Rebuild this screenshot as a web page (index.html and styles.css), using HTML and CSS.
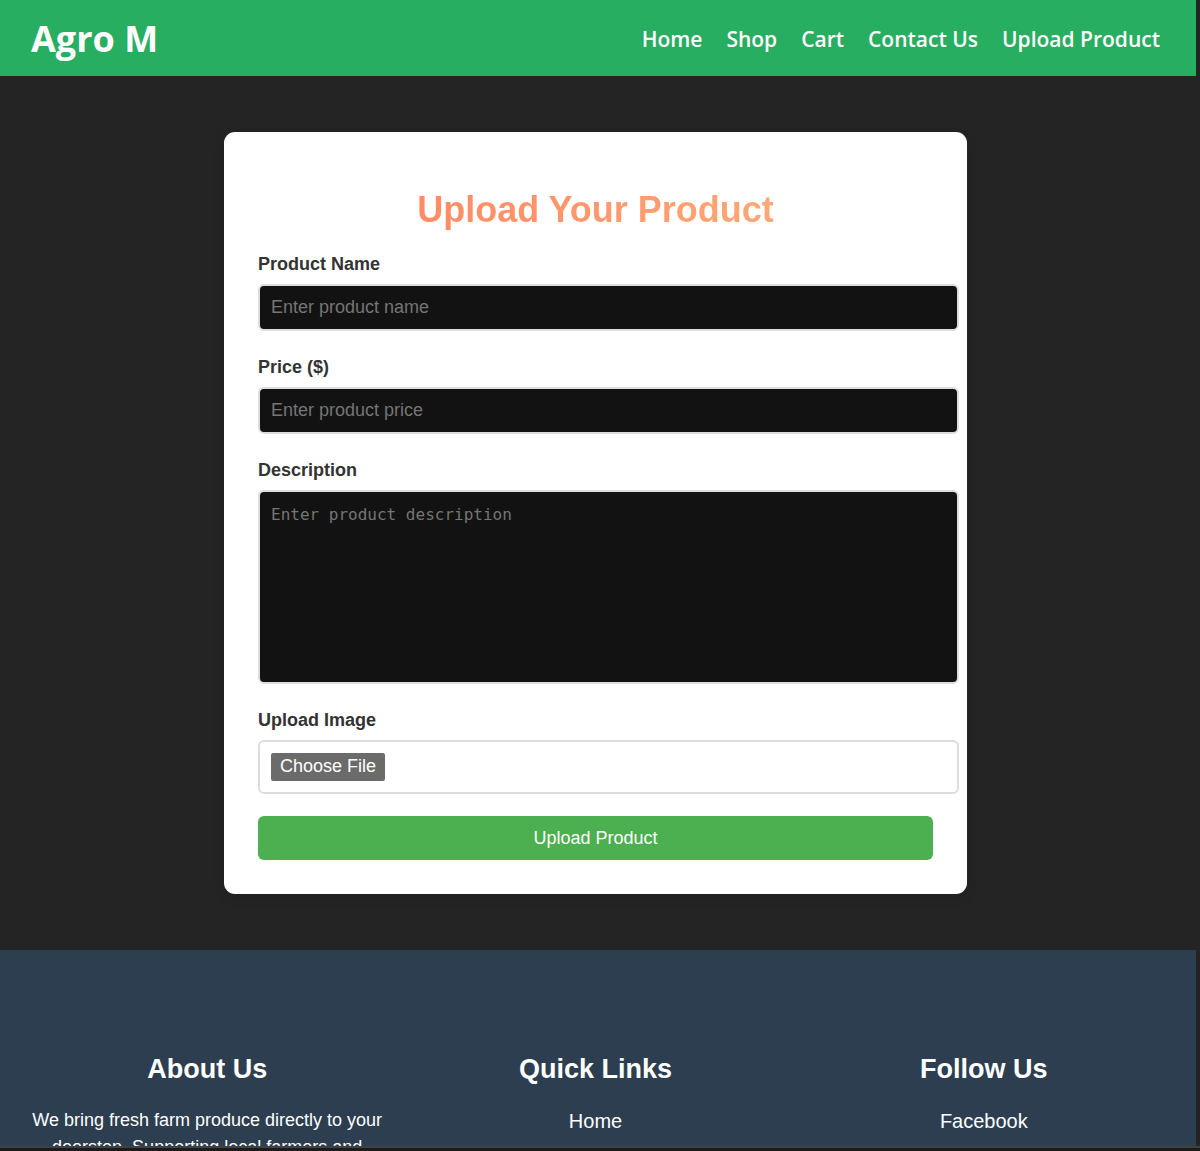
FILE: index.html
```
<!DOCTYPE html>
<html lang="en">
<head>
<meta charset="utf-8">
<meta name="viewport" content="width=device-width, initial-scale=1">
<title>Agro M - Upload Product</title>
<link rel="stylesheet" href="styles.css">
</head>
<body>
<div class="page">
  <header class="navbar">
    <div class="logo">Agro M</div>
    <nav class="nav-links">
      <a href="#home">Home</a>
      <a href="#shop">Shop</a>
      <a href="#cart">Cart</a>
      <a href="#contact">Contact Us</a>
      <a href="#upload">Upload Product</a>
    </nav>
  </header>
  <main class="content" id="upload">
    <form class="card">
      <h1 class="title">Upload Your Product</h1>
      <div class="field">
        <label for="name">Product Name</label>
        <input class="control" type="text" id="name" placeholder="Enter product name">
      </div>
      <div class="field">
        <label for="price">Price ($)</label>
        <input class="control" type="text" inputmode="decimal" id="price" placeholder="Enter product price">
      </div>
      <div class="field">
        <label for="description">Description</label>
        <textarea class="control description" id="description" placeholder="Enter product description"></textarea>
      </div>
      <div class="field">
        <label for="image">Upload Image</label>
        <input class="control file" type="file" id="image">
      </div>
      <button class="submit" type="submit">Upload Product</button>
    </form>
  </main>
  <footer class="footer">
    <section>
      <h2>About Us</h2>
      <p>We bring fresh farm produce directly to your doorstep. Supporting local farmers and</p>
    </section>
    <section>
      <h2>Quick Links</h2>
      <ul>
        <li><a href="#home">Home</a></li>
      </ul>
    </section>
    <section>
      <h2>Follow Us</h2>
      <ul>
        <li><a href="#facebook">Facebook</a></li>
      </ul>
    </section>
  </footer>
</div>
<div class="bottom-bar"></div>
</body>
</html>
```
FILE: styles.css
```
body {
  display: flex;
  flex-direction: column;
  height: 100vh;
  margin: 0;
  overflow: hidden;
  background: #242424;
  color: #fff;
  font-family: "Liberation Sans", Arial, sans-serif;
  font-size: 18px;
}

a {
  color: inherit;
  text-decoration: none;
}

.page {
  flex: 1;
  min-height: 0;
  margin-right: 4px;
  overflow: hidden;
}

.bottom-bar {
  flex: none;
  height: 3px;
  border-top: 2px solid #414141;
  background: #1c1c1c;
}

.navbar {
  display: flex;
  align-items: center;
  justify-content: space-between;
  height: 76px;
  padding: 0 36px 0 31px;
  background: #27ae60;
  font-family: "Open Sans", "Noto Sans", sans-serif;
}

.logo {
  font-size: 36px;
  font-weight: 700;
}

.nav-links {
  display: flex;
  gap: 24px;
  padding-top: 2px;
  font-size: 21px;
  font-weight: 600;
}

.content {
  padding: 56px 5px 56px 0;
}

.card {
  max-width: 675px;
  margin: 0 auto;
  padding: 34px;
  border-radius: 11px;
  background: #fff;
  box-shadow: 0 4px 12px rgba(0, 0, 0, 0.1);
}

.title {
  margin: 23px 0 19px;
  background: linear-gradient(to right, #ff7e5f, #feb47b);
  background-clip: text;
  -webkit-background-clip: text;
  color: transparent;
  font-size: 36px;
  line-height: 42px;
  text-align: center;
}

.field {
  margin-bottom: 22px;
}

.field label {
  display: block;
  margin-bottom: 5px;
  color: #333;
  font-weight: 700;
  line-height: 29px;
}

.control {
  display: block;
  box-sizing: content-box;
  width: 100%;
  height: 21px;
  margin: 0;
  padding: 11px;
  border: 2px solid #ddd;
  border-radius: 6px;
  background: #121212;
  color: #fff;
  font-family: inherit;
  font-size: 18px;
}

.control::placeholder {
  color: #757575;
}

.description {
  height: 168px;
  font-family: "DejaVu Sans Mono", monospace;
  font-size: 16px;
  line-height: 23px;
  resize: none;
}

.file {
  height: 28px;
  background: #fff;
}

.file::file-selector-button {
  height: 28px;
  margin: 0;
  padding: 0 9px 2px;
  border: 0;
  border-radius: 2px;
  background: #6b6b6b;
  color: #fff;
  font: inherit;
}

.submit {
  width: 100%;
  height: 44px;
  border: 0;
  border-radius: 6px;
  background: #4caf50;
  color: #fff;
  font-family: inherit;
  font-size: 18px;
}

.footer {
  display: grid;
  grid-template-columns: repeat(3, 1fr);
  gap: 34px;
  padding: 103px 35px 103px 30px;
  background: #2c3e50;
  text-align: center;
}

.footer h2 {
  margin: 0 0 22px;
  font-size: 27px;
  line-height: 32px;
}

.footer p {
  margin: 0;
  line-height: 27px;
}

.footer ul {
  margin: 0;
  padding: 0;
  list-style: none;
  font-size: 20px;
  line-height: 28px;
}
```
